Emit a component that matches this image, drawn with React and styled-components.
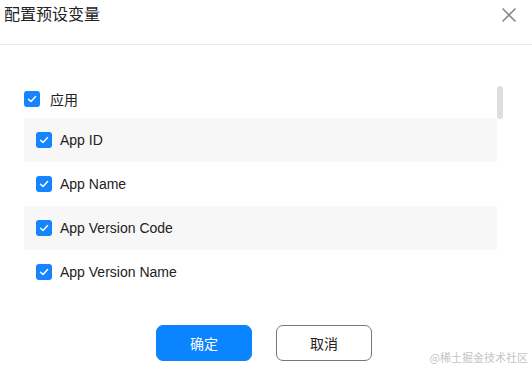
import React from 'react'
import styled, { createGlobalStyle } from 'styled-components'

const GlobalStyle = createGlobalStyle`
    html, body {
        margin: 0;
        background: #fff;
        font-family: "Liberation Sans", "Noto Sans CJK SC", sans-serif;
    }
`

const Dialog = styled.div`
    position: relative;
    width: 532px;
    height: 370px;
    background: #fff;
    overflow: hidden;
`

const Header = styled.div`
    height: 45px;
    box-sizing: border-box;
    display: flex;
    align-items: flex-start;
    justify-content: space-between;
    padding: 5px 14px 0 4px;
    border-bottom: 1px solid #e9e9e9;
`

const Title = styled.div`
    font-size: 16px;
    line-height: 20px;
    color: #222;
`

const Close = styled.div`
    width: 18px;
    height: 18px;
    margin-top: 1px;
    display: flex;
    align-items: center;
    justify-content: center;
`

const Body = styled.div`
    display: flex;
    padding: 41px 29px 0 24px;
    height: 208px;
`

const List = styled.div`
    flex: 1;
    display: flex;
    flex-direction: column;
    overflow: hidden;
`

const Track = styled.div`
    width: 6px;
`

const Thumb = styled.div`
    width: 6px;
    height: 33px;
    border-radius: 3px;
    background: #dedede;
`

const Group = styled.div`
    display: flex;
    align-items: center;
    gap: 10px;
    height: 26px;
    flex-shrink: 0;
    margin-bottom: 6px;
    font-size: 14px;
    color: #222;
`

const Row = styled.div`
    display: flex;
    align-items: center;
    gap: 8px;
    height: 44px;
    flex-shrink: 0;
    padding-left: 12px;
    font-size: 14px;
    color: #222;
    background: ${p => (p.$shaded ? '#f7f7f7' : '#fff')};
`

const Box = styled.span`
    width: 16px;
    height: 16px;
    border-radius: 3px;
    background: #1684fc;
    display: flex;
    align-items: center;
    justify-content: center;
    flex-shrink: 0;
`

const Footer = styled.div`
    display: flex;
    justify-content: center;
    gap: 24px;
    margin-top: 31px;
    padding-right: 4px;
`

const Button = styled.button`
    width: 96px;
    height: 36px;
    border-radius: 7px;
    font-family: inherit;
    font-size: 14px;
    cursor: pointer;
    border: 1px solid ${p => (p.$primary ? '#0a84ff' : '#777')};
    background: ${p => (p.$primary ? '#0a84ff' : '#fff')};
    color: ${p => (p.$primary ? '#fff' : '#222')};
`

const Watermark = styled.div`
    position: absolute;
    right: 4px;
    bottom: 5px;
    font-size: 11px;
    color: #c4c4c4;
    font-family: "Noto Sans CJK SC", serif;
`

const Check = () => (
    <Box>
        <svg width="10" height="10" viewBox="0 0 10 10">
            <polyline points="1.5,5.2 4,7.5 8.6,2.6" fill="none" stroke="#fff" strokeWidth="1.4" strokeLinecap="round" strokeLinejoin="round" />
        </svg>
    </Box>
)

const fields = ['App ID', 'App Name', 'App Version Code', 'App Version Name']

const App = () => {
    return (
        <Dialog>
            <GlobalStyle />
            <Header>
                <Title>配置预设变量</Title>
                <Close>
                    <svg width="16" height="16" viewBox="0 0 16 16">
                        <path d="M1.5 1.5 L14.5 14.5 M14.5 1.5 L1.5 14.5" stroke="#8a8a8a" strokeWidth="1.6" />
                    </svg>
                </Close>
            </Header>
            <Body>
                <List>
                    <Group>
                        <Check />
                        <span>应用</span>
                    </Group>
                    {fields.map((f, i) => (
                        <Row key={f} $shaded={i % 2 === 0}>
                            <Check />
                            <span>{f}</span>
                        </Row>
                    ))}
                </List>
                <Track>
                    <Thumb />
                </Track>
            </Body>
            <Footer>
                <Button $primary>确定</Button>
                <Button>取消</Button>
            </Footer>
            <Watermark>@稀土掘金技术社区</Watermark>
        </Dialog>
    )
}

export default App
